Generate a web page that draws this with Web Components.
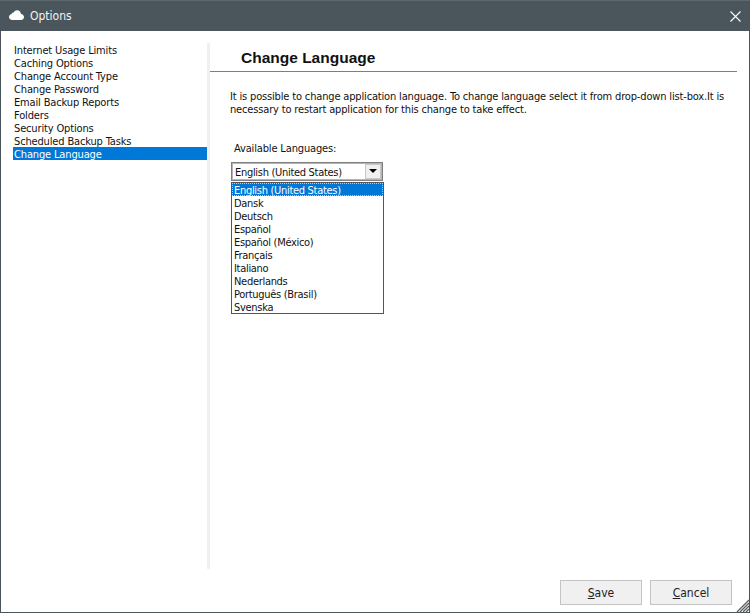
<!DOCTYPE html>
<html><head><meta charset="utf-8"><style>
html,body{margin:0;padding:0;background:#fff}
body{font:11px/13px "DejaVu Sans Condensed","Noto Sans",sans-serif;color:#111}
</style></head><body>
<options-window></options-window>
<script>
const FONT='"DejaVu Sans Condensed","Noto Sans",sans-serif';
function def(name,html){customElements.define(name,class extends HTMLElement{constructor(){super();this.attachShadow({mode:'open'}).innerHTML=html;}});}

def('title-bar',`<style>
:host{display:flex;align-items:center;height:30px;background:#4b555c;border-top:1px solid #5e686f;color:#f2f4f5;font:12px ${FONT}}
svg{display:block}.cloud{margin:0 6px 0 9px;transform:translateY(-1px)}.t{flex:1}.x{margin-right:9px}
</style>
<svg class="cloud" width="15" height="10" viewBox="0 0 15 10"><path fill="#fff" d="M3.4 10C1.4 10 0 8.8 0 7.1 0 5.6 1 4.6 2.4 4.3 2.6 3.3 3.4 2.7 4.4 2.8 5.1 1.2 6.5.3 8.1.3c2.1 0 3.7 1.500 3.900 3.600C13.700 4.100 15 5.300 15 7c0 1.800-1.400 3-3.200 3z"/></svg>
<span class="t"><slot></slot></span>
<svg class="x" width="11" height="11" viewBox="0 0 11 11"><path d="M.5.5l10 10M10.500.5l-10 10" stroke="#fff" stroke-width="1.100" fill="none"/></svg>`);

def('nav-item',`<style>
:host{display:block;box-sizing:border-box;height:13px;line-height:13px;padding:1px 0 0 1px;white-space:nowrap;letter-spacing:-.15px;color:#111}
:host([selected]){background:#0078d7;color:#fff}
</style><slot></slot>`);

def('nav-list',`<style>
:host{display:block;width:194px;margin-left:12px;border-right:3px solid #f0f0f0;height:526px;flex:none}
</style><slot></slot>`);

def('page-header',`<style>
:host{display:block;height:28px;margin-right:12px;border-bottom:1px solid #7f7f7f;padding-left:31px;font:bold 15.500px/30px "Liberation Sans",Arial,sans-serif;color:#111}
</style><slot></slot>`);

def('lang-option',`<style>
:host{display:block;box-sizing:border-box;height:13px;line-height:13px;padding:1px 0 0 2px;white-space:nowrap;letter-spacing:-.3px;color:#111}
:host([selected]){background:#0078d7;color:#fff;outline:1px dotted #a9d2f2;outline-offset:-1px}
</style><slot></slot>`);

def('lang-combo',`<style>
:host{display:block;position:relative;width:152px;height:20px;margin-left:21px}
.box{box-sizing:border-box;height:19px;border:1px solid #808080;box-shadow:inset 0 0 0 1px #b4b4b4;display:flex;align-items:center;padding-left:3px;letter-spacing:-.3px;color:#111;background:#fff}
.v{flex:1;padding-top:1px}
.btn{width:16px;height:15px;margin:0 1px 1px 0;background:#f0f0f0;border:1px solid #c8c8c8;box-sizing:border-box;display:flex;align-items:center;justify-content:center}
.btn i{display:block;width:0;height:0;border:4px solid transparent;border-top-color:#000;border-bottom:0}
.pop{position:absolute;left:0;top:20px;width:151px;height:130px;background:#fff;border:1px solid #555}
</style>
<div class="box"><span class="v">English (United States)</span><span class="btn"><i></i></span></div>
<div class="pop"><slot></slot></div>`);

def('push-button',`<style>
:host{display:flex;align-items:center;justify-content:center;box-sizing:border-box;width:82px;height:25px;background:#f0f0f0;border:1px solid #c4c4c4;color:#222;font:12px ${FONT}}
u{text-underline-offset:1px}
</style><slot></slot>`);

def('options-window',`<style>
:host{display:flex;flex-direction:column;width:750px;height:613px;box-sizing:border-box;border:solid #4b555c;border-width:0 1px 1px;background:#fff;position:relative;font:11px/13px ${FONT}}
.tb{margin:0 -1px}
.main{display:flex;height:526px;margin-top:12px;flex:none}
.content{flex:1;min-width:0}
.desc{margin:18px 12px 0 20px;line-height:13px;letter-spacing:-.16px;color:#111}
.lab{margin:26px 0 7px 24px;letter-spacing:-.15px;color:#111}
.foot{flex:1;display:flex;justify-content:flex-end;align-items:flex-start;gap:8px;padding:11px 17px 0 0}
.grip{position:absolute;right:0;bottom:0;display:block}
</style>
<title-bar class="tb">Options</title-bar>
<div class="main">
<nav-list>
<nav-item>Internet Usage Limits</nav-item>
<nav-item>Caching Options</nav-item>
<nav-item>Change Account Type</nav-item>
<nav-item>Change Password</nav-item>
<nav-item>Email Backup Reports</nav-item>
<nav-item>Folders</nav-item>
<nav-item>Security Options</nav-item>
<nav-item>Scheduled Backup Tasks</nav-item>
<nav-item selected>Change Language</nav-item>
</nav-list>
<div class="content">
<page-header>Change Language</page-header>
<div class="desc">It is possible to change application language. To change language select it from drop-down list-box.It is necessary to restart application for this change to take effect.</div>
<div class="lab">Available Languages:</div>
<lang-combo>
<lang-option selected>English (United States)</lang-option>
<lang-option>Dansk</lang-option>
<lang-option>Deutsch</lang-option>
<lang-option>Español</lang-option>
<lang-option>Español (México)</lang-option>
<lang-option>Français</lang-option>
<lang-option>Italiano</lang-option>
<lang-option>Nederlands</lang-option>
<lang-option>Português (Brasil)</lang-option>
<lang-option>Svenska</lang-option>
</lang-combo>
</div>
</div>
<div class="foot">
<push-button><span><u>S</u>ave</span></push-button>
<push-button><span><u>C</u>ancel</span></push-button>
</div>
<svg class="grip" width="13" height="13" viewBox="0 0 13 13"><path d="M13 1L1 13M13 4L4 13M13 7L7 13M13 10L10 13" stroke="#5c5c5c" stroke-width="1.300" fill="none"/></svg>`);
</script>
</body></html>
